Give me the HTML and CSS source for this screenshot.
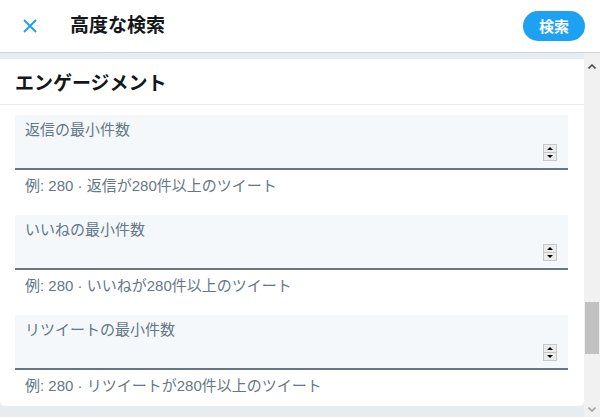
FILE: index.html
```html
<!DOCTYPE html>
<html lang="ja">
<head>
<meta charset="utf-8">
<link rel="stylesheet" href="styles.css">
</head>
<body>
<header class="header">
  <button class="close" aria-label="閉じる">
    <svg viewBox="0 0 14 14" width="14" height="14"><path d="M1 1 L13 13 M13 1 L1 13" stroke="#1da1f2" stroke-width="2" stroke-linecap="butt" fill="none"/></svg>
  </button>
  <h1 class="title">高度な検索</h1>
  <button class="search-btn">検索</button>
</header>
<div class="body">
  <main class="main">
    <section class="panel">
      <h2 class="section-head">エンゲージメント</h2>
      <div class="fields">
        <div class="field">
          <div class="box">
            <div class="label">返信の最小件数</div>
            <div class="spin-row"><div class="spin"><span class="up"></span><span class="down"></span></div></div>
          </div>
          <div class="help">例: 280 · 返信が280件以上のツイート</div>
        </div>
        <div class="field">
          <div class="box">
            <div class="label">いいねの最小件数</div>
            <div class="spin-row"><div class="spin"><span class="up"></span><span class="down"></span></div></div>
          </div>
          <div class="help">例: 280 · いいねが280件以上のツイート</div>
        </div>
        <div class="field">
          <div class="box">
            <div class="label">リツイートの最小件数</div>
            <div class="spin-row"><div class="spin"><span class="up"></span><span class="down"></span></div></div>
          </div>
          <div class="help">例: 280 · リツイートが280件以上のツイート</div>
        </div>
      </div>
    </section>
  </main>
  <div class="scrollbar">
    <div class="arrow arrow-up"><svg viewBox="0 0 8 5" width="8" height="5"><path d="M0.5 4.5 L4 1 L7.5 4.5" stroke="#505050" stroke-width="1.6" fill="none"/></svg></div>
    <div class="track"><div class="thumb"></div></div>
    <div class="arrow arrow-down"><svg viewBox="0 0 8 5" width="8" height="5"><path d="M0.5 0.5 L4 4 L7.5 0.5" stroke="#a3a3a3" stroke-width="1.6" fill="none"/></svg></div>
  </div>
</div>
</body>
</html>
```
FILE: styles.css
```css
* { box-sizing: border-box; }
html, body {
  margin: 0;
  padding: 0;
  width: 600px;
  height: 417px;
  overflow: hidden;
  background: #fff;
  font-family: "Liberation Sans", "Noto Sans CJK JP", sans-serif;
  color: #14171a;
}
.header {
  height: 53px;
  border-bottom: 1px solid #ccd6dd;
  display: flex;
  align-items: center;
  padding: 0 15px 0 23px;
}
.close {
  border: 0;
  background: none;
  padding: 0;
  width: 14px;
  height: 14px;
  display: flex;
  margin-top: -1px;
}
.title {
  margin: 0 0 0 33px;
  font-size: 19px;
  font-weight: bold;
  line-height: 24px;
  flex: 1;
  margin-top: -1px;
}
.search-btn {
  border: 0;
  background: #1da1f2;
  color: #fff;
  font-family: inherit;
  font-weight: bold;
  font-size: 15px;
  height: 30px;
  width: 62px;
  border-radius: 15px;
  padding: 0;
  margin-top: -1px;
}
.body {
  display: flex;
  height: 364px;
}
.main {
  flex: 1;
  background: #e6ecf0;
  padding-top: 6px;
  overflow: hidden;
}
.panel {
  background: #fff;
  border-radius: 0 0 5px 5px;
  padding-bottom: 10px;
}
.section-head {
  margin: 0;
  height: 46px;
  padding: 0 15px;
  display: flex;
  align-items: center;
  font-size: 19px;
  font-weight: bold;
  border-bottom: 1px solid #e6ecf0;
}
.fields {
  padding: 10px 16px 0 15px;
  display: flex;
  flex-direction: column;
  gap: 19px;
}
.box {
  height: 55px;
  background: #f5f8fa;
  border-bottom: 2px solid #657786;
  padding: 5px 11px 0 10px;
  display: flex;
  flex-direction: column;
}
.label {
  font-size: 15px;
  line-height: 20px;
  color: #657786;
}
.spin-row {
  display: flex;
  justify-content: flex-end;
  margin-top: 4px;
}
.spin {
  width: 14px;
  height: 17px;
  display: flex;
  flex-direction: column;
  background: #dcdcdc;
  border: 1px solid #c8c8c8;
}
.spin span {
  flex: 1;
  display: flex;
  align-items: center;
  justify-content: center;
  background: #ececec;
}
.spin .up { border-bottom: 1px solid #c8c8c8; }
.spin .up::after {
  content: "";
  border-left: 3px solid transparent;
  border-right: 3px solid transparent;
  border-bottom: 3px solid #000;
}
.spin .down::after {
  content: "";
  border-left: 3px solid transparent;
  border-right: 3px solid transparent;
  border-top: 3px solid #000;
}
.help {
  margin-top: 6px;
  padding-left: 10px;
  font-size: 15px;
  line-height: 20px;
  color: #657786;
}
.scrollbar {
  width: 16px;
  background: #f1f1f1;
  display: flex;
  flex-direction: column;
}
.arrow {
  height: 15px;
  display: flex;
  align-items: center;
  justify-content: center;
}
.arrow-up { margin-top: 6px; }
.track {
  flex: 1;
  display: flex;
  flex-direction: column;
  padding-top: 228px;
}
.thumb {
  height: 52px;
  margin: 0 1px;
  background: #c1c1c1;
}
```
